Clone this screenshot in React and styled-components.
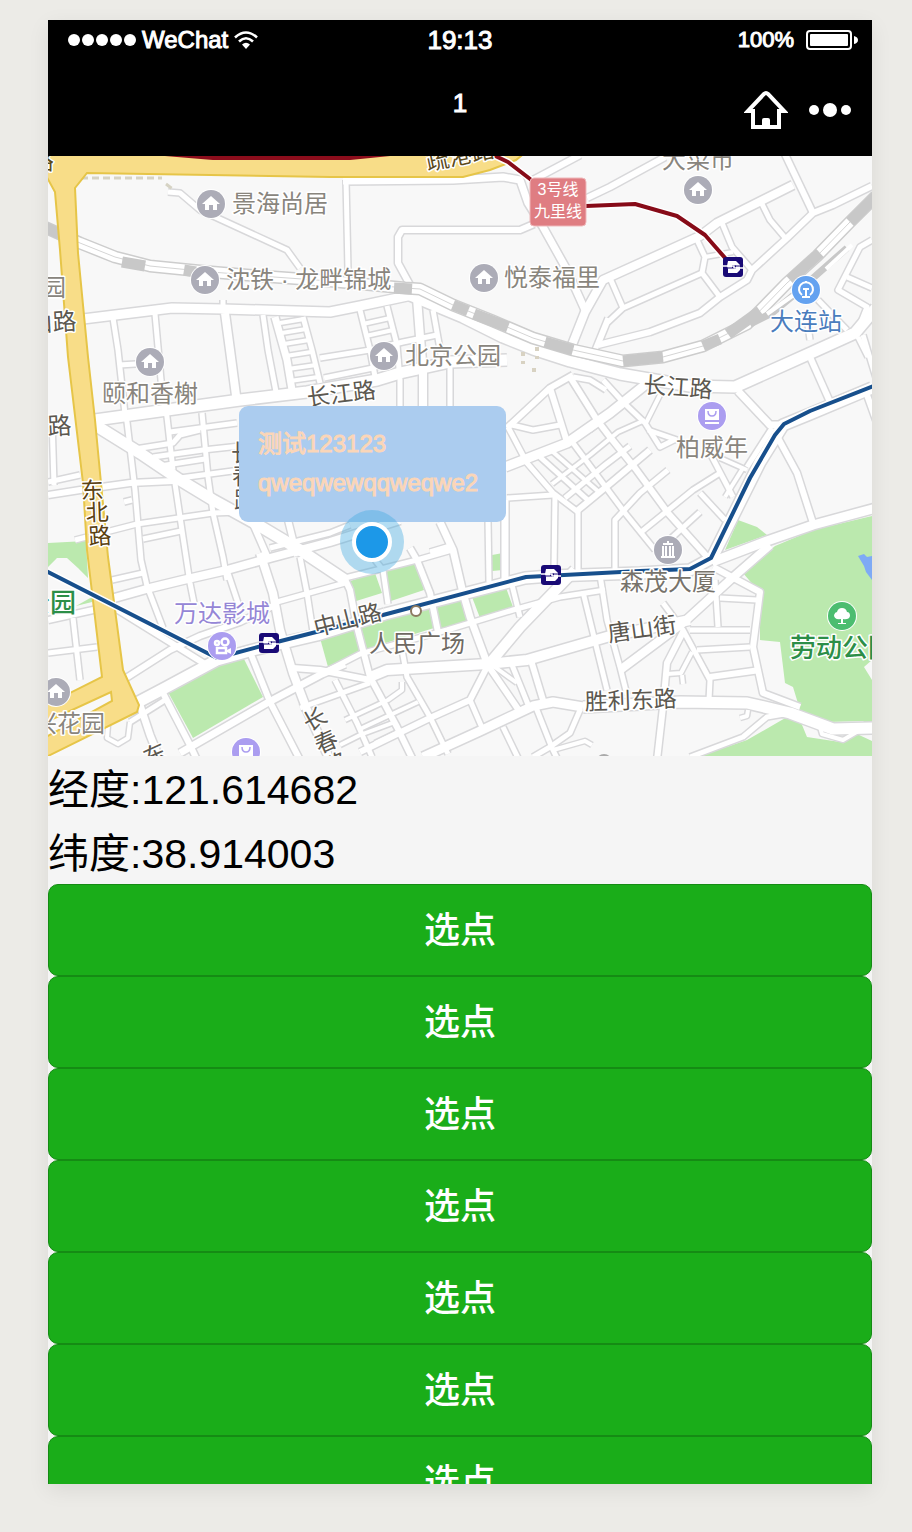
import React from 'react';
import styled, { createGlobalStyle } from 'styled-components';

const sans = '"Liberation Sans", "Noto Sans CJK SC", sans-serif';

const GlobalStyle = createGlobalStyle`
  * {
    box-sizing: border-box;
  }
  body {
    margin: 0;
    background: #ecebe7;
    font-family: ${sans};
  }
`;

const Page = styled.div`
  height: 100vh;
  padding: 20px 40px 48px 48px;
`;

const Phone = styled.main`
  height: 100%;
  overflow: hidden;
  background: #f5f5f5;
  box-shadow: 0 6px 20px rgba(0, 0, 0, 0.08);
`;

const Header = styled.header`
  background: #000;
  color: #fff;
`;

const StatusBar = styled.div`
  display: grid;
  grid-template-columns: 1fr auto 1fr;
  align-items: center;
  height: 40px;
  padding: 0 14px;
`;

const StatusGroup = styled.div`
  display: flex;
  align-items: center;
  justify-content: ${props => (props.$end ? 'flex-end' : 'flex-start')};
  gap: ${props => (props.$end ? 12 : 6)}px;
  padding-left: 6px;
`;

const StatusText = styled.span`
  font-size: ${props => props.$size}px;
  line-height: 40px;
  -webkit-text-stroke: 1px #fff;
`;

const NavBar = styled.div`
  display: grid;
  grid-template-columns: 1fr auto 1fr;
  height: 96px;
  padding: 0 20px;
`;

const Title = styled.h1`
  grid-column: 2;
  margin: 0;
  font-size: 26px;
  font-weight: 400;
  line-height: 86px;
  -webkit-text-stroke: 1px #fff;
`;

const NavActions = styled.div`
  display: flex;
  align-items: center;
  justify-content: flex-end;
  gap: 20px;
  padding-top: 4px;
`;

const IconButton = styled.button`
  display: flex;
  padding: 0;
  border: 0;
  background: none;
  color: #fff;
  cursor: pointer;
`;

const MapView = styled.section`
  position: relative;
  height: 600px;
  overflow: hidden;
  background: #f8f8f8;
`;

const MapCanvas = styled.svg`
  display: block;
  width: 100%;
  height: 100%;
  font-family: ${sans};
`;

const Callout = styled.div`
  position: absolute;
  top: 250px;
  left: 191px;
  min-width: 267px;
  padding: 18px 19px 20px;
  border-radius: 9px;
  background: #abccef;
  color: #fbd6b8;
  font-size: 24px;
  line-height: 39px;
  -webkit-text-stroke: 1px #fbd6b8;
`;

const Marker = styled.div`
  position: absolute;
  top: 354px;
  left: 292px;
  display: flex;
  align-items: center;
  justify-content: center;
  width: 64px;
  height: 64px;
  border-radius: 50%;
  background: rgba(66, 170, 226, 0.4);
  &::after {
    content: '';
    width: 32px;
    height: 32px;
    border: 4px solid #fff;
    border-radius: 50%;
    background: #1c98e8;
  }
`;

const Coordinates = styled.div`
  padding-top: 2px;
  height: 128px;
`;

const Coordinate = styled.p`
  margin: 0;
  color: #000;
  font-size: 41px;
  line-height: 64px;
`;

const PickButton = styled.button`
  display: block;
  width: 100%;
  height: 92px;
  padding: 2px 0 0;
  border: 1px solid #158b14;
  border-radius: 10px;
  background: #1aad19;
  color: #fff;
  font-family: ${sans};
  font-size: 36px;
  font-weight: 500;
  line-height: 88px;
  cursor: pointer;
`;

// [width, points]
const roads = [
  // upper left
  [5, '168,192 180,193 200,210 287,250 300,268'],
  [9, '83,319 172,308 223,309 330,312 360,306 412,295'],
  [5, '113,318 118,350 125,414 127,422 135,490 141,560 147,586 163,628'],
  [5, '119,365 152,363'],
  [5, '155,314 161,380 167,417 173,470 183,537 190,583 194,603'],
  [8, '225,313 230,350 237,403'],
  [5, '263,315 268,350 277,397'],
  [7, '275,317 287,360 292,390'],
  [5, '303,317 312,350 320,383'],
  [5, '223,309 223,300'],
  [4, '280,323 304,319'],
  [4, '282,333 306,329'],
  [4, '284,344 309,340'],
  [4, '286,356 311,352'],
  [4, '288,369 316,365'],
  [4, '290,381 318,377'],
  [5, '346,180 348,270'],
  [6, '410,285 398,263 398,237 402,230 520,230 534,224'],
  [7, '343,181 453,180 503,177 520,180 528,203 543,227 567,270 585,310'],
  [6, '533,180 580,155'],
  [6, '587,198 610,187 665,157'],
  [5, '360,310 370,350 376,382'],
  [5, '387,306 397,345 400,380 400,410'],
  [8, '417,298 420,337 423,373 423,410'],
  [5, '433,310 443,366'],
  [4, '363,324 390,318'],
  [4, '366,336 393,330'],
  [5, '320,358 370,350 403,342 437,335'],
  [5, '450,366 450,410'],
  [5, '324,378 373,368 400,358'],
  // changjiang road west and the diagonal
  [11, '95,420 167,410 240,400 307,392 377,380 400,373 450,362 507,360'],
  [11, '95,425 140,453 180,480 213,500 253,522 300,550 345,580'],
  [5, '170,432 237,423'],
  [5, '135,449 173,443 180,435 200,430'],
  [5, '153,457 203,450 240,446'],
  [5, '160,466 205,459'],
  [5, '180,478 240,470'],
  [5, '202,413 208,477 213,513 223,557 227,580'],
  [6, '48,495 80,490 130,483 173,481'],
  [5, '52,418 54,485'],
  [5, '48,482 80,475'],
  [5, '75,540 137,524 213,513 240,512'],
  [5, '143,539 181,531'],
  [5, '132,500 124,502'],
  [6, '253,524 267,556'],
  [6, '288,520 297,556'],
  [5, '270,548 330,533 350,525'],
  [8, '100,602 150,588 183,580 227,570 270,558 330,542 400,520'],
  [5, '112,580 143,573'],
  [5, '227,570 241,612'],
  [8, '260,553 273,593 280,630 293,673 307,710 330,760'],
  [5, '277,602 345,583'],
  [5, '300,557 307,593 313,632'],
  // lower left
  [6, '48,620 93,610 115,600'],
  [5, '48,653 97,647'],
  [5, '73,618 80,680'],
  [6, '118,610 168,641 205,664'],
  [6, '123,680 170,650 200,636 240,622 277,604'],
  [11, '127,708 165,688 217,660 253,650 317,635 385,614'],
  [5, '130,722 165,700'],
  [6, '163,693 190,745 197,760'],
  [7, '180,753 267,703 322,674 345,664'],
  [6, '250,652 270,702 300,760'],
  [7, '140,705 150,735 160,760'],
  [4, '108,725 107,738 118,744 128,738 130,722'],
  // city core
  [11, '872,388 810,414 783,425 760,462 712,558 690,570 640,573 550,576 525,578 463,594 385,614'],
  [6, '343,575 350,590 357,627 370,677 397,727 413,760'],
  [5, '375,560 383,570 388,604'],
  [5, '345,578 417,560 452,550'],
  [6, '410,548 417,560 430,593 438,632'],
  [7, '440,522 453,550 463,593 470,617 487,663'],
  [5, '488,520 489,582'],
  [7, '505,500 505,582'],
  [5, '450,546 430,552'],
  [5, '325,672 360,654 447,630 513,610 560,597 605,590'],
  [10, '370,677 387,670 487,664 527,660 610,636 690,620'],
  [6, '293,668 320,670 370,680'],
  [10, '490,663 520,627 575,570'],
  [5, '510,577 520,617'],
  [5, '583,592 593,633 607,690'],
  [6, '530,657 543,700'],
  [5, '510,660 529,707'],
  [6, '487,664 507,693 520,712'],
  [4, '492,665 517,683'],
  [9, '423,757 480,731 533,706 553,702 583,707'],
  [6, '487,667 470,700 430,718 360,752'],
  [5, '470,700 483,730'],
  [5, '402,650 407,677 430,717 448,754'],
  [5, '300,708 370,683'],
  [5, '335,680 357,723 372,757'],
  [4, '345,720 388,700 402,690 402,682'],
  [4, '358,730 418,702'],
  [4, '340,745 360,735 395,722'],
  [4, '375,743 402,730'],
  [5, '580,710 570,733 550,747 533,757'],
  [5, '503,727 519,760'],
  [5, '535,705 552,748 558,760'],
  [4, '553,750 585,741 592,745'],
  // grid east of the callout
  [6, '507,428 550,388 573,375'],
  [5, '512,425 533,430 560,425'],
  [6, '550,388 567,442'],
  [5, '508,427 527,463 553,493 578,512'],
  [9, '505,467 567,443 610,413 645,385'],
  [5, '507,498 553,495'],
  [5, '555,495 554,570'],
  [5, '578,508 578,570'],
  [6, '570,377 597,420 610,437 635,468 668,513 710,560'],
  [5, '573,377 590,380 606,390'],
  [5, '540,457 590,502'],
  [4, '553,452 600,493'],
  [5, '573,443 625,513 655,550'],
  [6, '578,510 612,482 650,450'],
  [4, '552,484 590,455 618,432 645,420'],
  [5, '565,498 605,465 630,446'],
  [5, '603,380 623,402 645,423 660,447 676,439'],
  [4, '645,425 660,395'],
  [5, '648,430 677,440'],
  [4, '590,430 620,405'],
  [5, '615,570 615,520 640,493 668,470'],
  [5, '640,533 693,490 720,473'],
  [5, '655,553 700,512'],
  [5, '700,493 725,520'],
  [5, '711,455 733,497'],
  [4, '720,458 747,470'],
  [4, '725,497 743,468'],
  // north east
  [11, '410,295 463,317 503,337 533,349 570,361 620,374 690,386 735,387 813,352 855,333 876,308'],
  [8, '566,360 585,312 603,280 700,236 717,223 793,185'],
  [6, '783,150 813,213'],
  [5, '760,200 770,220 787,240'],
  [5, '722,223 732,247 752,270'],
  [6, '872,186 833,205 813,213 787,238 752,270 747,280 720,297 700,313 650,332 598,345'],
  [5, '697,240 705,257 702,273 720,297'],
  [4, '705,257 733,252'],
  [5, '702,273 623,308 607,323 598,345'],
  [5, '610,278 623,308'],
  [5, '872,240 860,247 838,290 867,307 858,330'],
  [5, '847,277 872,288'],
  [5, '810,340 808,325'],
  [5, '818,300 847,330'],
  [5, '858,337 868,357'],
  [5, '595,350 608,318'],
  [6, '810,357 830,402'],
  [5, '863,335 876,378'],
  [6, '867,395 876,420'],
  [7, '738,391 770,425 783,425'],
  [5, '772,428 747,467'],
  [6, '778,438 797,473 813,523'],
  [9, '876,508 813,525 767,541 712,562'],
  [8, '770,545 730,580 683,623 620,670'],
  // lower right
  [5, '600,575 607,620 620,667 627,695'],
  [6, '713,567 760,592 753,647 763,693 800,707'],
  [5, '715,580 718,627'],
  [5, '720,598 757,600'],
  [5, '690,630 750,630'],
  [5, '663,603 683,630 710,680 709,700'],
  [6, '683,632 667,663 663,707 657,760'],
  [5, '697,650 750,647'],
  [6, '710,677 760,670'],
  [4, '667,674 681,673 692,652'],
  [4, '682,675 683,684'],
  [11, '583,707 680,702 747,703 790,713 833,729 876,728'],
  [5, '690,757 743,737 767,717 790,713'],
  [4, '820,727 822,734 843,740 860,730'],
  [4, '748,710 747,716 740,718']
];

const rail =
  '40,225 80,243 115,257 150,266 200,271 260,276 330,281 405,288 420,289 453,305 493,321 533,338 573,350 623,361 663,357 703,346 747,324 787,283 817,256 850,222 876,196';
const railDark = [
  '40,225 60,234',
  '122,262 145,266',
  '184,270 196,272',
  '394,288 412,289',
  '453,305 468,311',
  '474,314 508,327',
  '545,342 573,350',
  '623,361 663,357',
  '703,346 720,339',
  '728,334 760,311',
  '790,280 820,253',
  '850,222 876,196'
];

const parks = [
  '872,516 813,530 775,546 743,573 760,593 760,640 780,642 785,683 793,687 800,710 827,722 863,721 872,727',
  '700,756 747,740 787,717 800,720 807,737 840,742 857,734 872,741 872,756',
  '738,520 757,527 767,535 725,550',
  '48,543 86,541 88,578 78,568 67,558 57,558 48,567',
  '76,606 92,597 92,602',
  '168,692 217,665 243,657 263,697 193,738',
  '347,582 375,573 382,593 353,602',
  '383,572 415,560 424,590 388,602',
  '320,638 353,628 360,653 328,667',
  '360,624 428,605 434,628 363,650',
  '435,608 463,598 472,620 440,630',
  '472,597 505,585 513,607 480,618',
  '492,555 503,553 503,570 492,571'
];

const labels = [
  { t: '景海尚居', x: 232, y: 212 },
  { t: '沈铁 · 龙畔锦城', x: 226, y: 288 },
  { t: '悦泰福里', x: 504, y: 286 },
  { t: '北京公园', x: 405, y: 364 },
  { t: '颐和香榭', x: 102, y: 402 },
  { t: '大菜市', x: 662, y: 168 },
  { t: '柏威年', x: 676, y: 456 },
  { t: '森茂大厦', x: 620, y: 590, c: '#77736b' },
  { t: '人民广场', x: 369, y: 652, c: '#6f6a63' },
  { t: '兴花园', x: 33, y: 732 },
  { t: '园', x: 42, y: 296 },
  { t: '山路', x: 29, y: 332, r: -3, c: '#5c5850' },
  { t: '路', x: 48, y: 435, r: -3, c: '#5c5850' },
  { t: '路', x: 30, y: 169, c: '#5b4a1a' },
  { t: '大连站', x: 770, y: 330, c: '#4a7dbd' },
  { t: '万达影城', x: 174, y: 622, c: '#9586d6' },
  { t: '劳动公园', x: 790, y: 657, c: '#2c8e48', s: 26, w: 500 },
  { t: '公园', x: 24, y: 612, c: '#2c8e48', s: 26, w: 500 },
  { t: '长江路', x: 308, y: 406, r: -7, c: '#5c5850', s: 23 },
  { t: '长江路', x: 643, y: 393, r: 4, c: '#5c5850', s: 23 },
  { t: '中山路', x: 316, y: 636, r: -14, c: '#5c5850', s: 23 },
  { t: '唐山街', x: 609, y: 642, r: -8, c: '#5c5850', s: 23 },
  { t: '胜利东路', x: 585, y: 710, r: -2, c: '#5c5850', s: 23 },
  { t: '疏港路', x: 428, y: 171, r: -12, c: '#5b4a1a', s: 23 },
  { t: '东', x: 81, y: 499, r: -2, c: '#5b4212', s: 23 },
  { t: '北', x: 86, y: 521, r: -2, c: '#5b4212', s: 23 },
  { t: '路', x: 89, y: 545, r: -4, c: '#5b4212', s: 23 },
  { t: '长', x: 309, y: 732, r: -30, c: '#5c5850', s: 23 },
  { t: '春', x: 319, y: 754, r: -24, c: '#5c5850', s: 23 },
  { t: '路', x: 329, y: 776, r: -24, c: '#5c5850', s: 23 },
  { t: '东', x: 148, y: 767, r: -24, c: '#5c5850', s: 23 },
  { t: '长', x: 231, y: 461, c: '#5c5850', s: 23 },
  { t: '春', x: 232, y: 484, c: '#5c5850', s: 23 },
  { t: '路', x: 234, y: 508, c: '#5c5850', s: 23 }
];

const homes = [[211, 204], [205, 280], [484, 278], [384, 356], [150, 362], [698, 190], [56, 692]];
const stations = [[733, 267], [551, 575], [269, 643]];
const shops = [[712, 416], [246, 752]];

const Poi = ({ x, y, color = '#acacb7', children }) => (
  <g transform={`translate(${x} ${y})`}>
    <circle r="15" fill="#fff" />
    <circle r="14" fill={color} />
    {children}
  </g>
);

const Lines = ({ points, ...rest }) => (
  <polyline points={points} fill="none" strokeLinejoin="round" {...rest} />
);

const CityMap = () => (
  <MapCanvas viewBox="48 156 824 600" preserveAspectRatio="xMidYMid slice" role="img" aria-label="地图">
    <rect x="48" y="156" width="824" height="600" fill="#f8f8f8" />
    {parks.map(p => <polygon key={p} points={p} fill="#bbe9ae" />)}
    <path d="M858 556l6-2 3 3 5-1v24l-6-8-2-6z" fill="#7eaaf5" />
    <path d="M864 667l8 13v-20z" fill="#f8f8f8" />

    {roads.map(([w, p]) => <Lines key={p} points={p} stroke="#d8d8da" strokeWidth={w + 3} />)}
    {roads.map(([w, p]) => <Lines key={p} points={p} stroke="#fff" strokeWidth={w} />)}

    {/* railway */}
    <Lines points={rail} stroke="#cdcdcd" strokeWidth="13" />
    <Lines points={rail} stroke="#fff" strokeWidth="10" />
    <Lines points={rail} stroke="#d5d5d5" strokeWidth="1" />
    {railDark.map(p => <Lines key={p} points={p} stroke="#c8c8c8" strokeWidth="11" />)}
    <Lines points="750,324 772,313 795,294 847,248" stroke="#c8c8c8" strokeWidth="7" />
    <Lines points="767,314 795,294 812,280" stroke="#fff" strokeWidth="4" />
    <Lines points="826,269 852,245" stroke="#fff" strokeWidth="4" />
    <path d="M70 178H162M166 184l8 6" stroke="#d6d3c4" strokeWidth="3" strokeDasharray="7 4" fill="none" />
    <path d="M523 352v12M537 347v12M534 368v8" stroke="#d8d2c2" strokeWidth="4" strokeDasharray="4 5" />

    {/* ring road */}
    <path
      d="M44 152H526L516 160 490 170 463 177 330 177 87 173 75 188 78 253 88 357 95 420 108 557 123 670 139 705 137 712 44 758V706L102 677 87 550 83 483 68 357 60 250 55 192 44 172Z"
      fill="#f8dd88"
      stroke="#e6c548"
      strokeWidth="2"
    />
    <path d="M44 723L111 692 112 701 44 738Z" fill="#f8f8f8" stroke="#e6c548" strokeWidth="2" />

    {/* metro */}
    <Lines points="165,154 213,158 350,158 390,154" stroke="#8c0d1c" strokeWidth="4" />
    <Lines points="487,152 508,162 534,182 560,206 586,206 635,204 677,216 705,235 733,267" stroke="#fff" strokeWidth="7" />
    <Lines points="487,152 508,162 534,182 560,206 586,206 635,204 677,216 705,235 733,267" stroke="#870b18" strokeWidth="4" />
    <Lines points="44,570 217,658 269,644 383,615 526,577 640,571 690,569 711,558 750,478 775,435 784,424 810,411 876,385" stroke="#fff" strokeWidth="7" />
    <Lines points="44,570 217,658 269,644 383,615 526,577 640,571 690,569 711,558 750,478 775,435 784,424 810,411 876,385" stroke="#174f8c" strokeWidth="4" />
    <rect x="530" y="178" width="56" height="48" rx="4" fill="#df7d82" stroke="#efb9bb" />
    <g fill="#fff" fontSize="16" textAnchor="middle">
      <text x="558" y="195">3号线</text>
      <text x="558" y="217">九里线</text>
    </g>
    {stations.map(([x, y]) => (
      <g key={x} transform={`translate(${x} ${y})`}>
        <rect x="-10" y="-10" width="20" height="20" rx="3" fill="#190a76" />
        <path d="M-5-6H3L7-2V3L4 6H-5V2L-6-1Z" fill="#fff" />
        <path d="M-1-2H2L3-1V2H0L-1 1Z" fill="#190a76" />
        <path d="M-10-1H1V1H10" fill="none" stroke="#fff" strokeWidth="1.5" />
        <path d="M-9 1H-1M2-1H9" fill="none" stroke="#190a76" />
      </g>
    ))}

    {/* places */}
    {homes.map(([x, y]) => (
      <Poi key={x} x={x} y={y}>
        <path d="M0-8L9 0H6V6H2V1H-2V6H-6V0H-9Z" fill="#fff" />
      </Poi>
    ))}
    {shops.map(([x, y]) => (
      <Poi key={x} x={x} y={y} color="#ab9df0">
        <path d="M-7-7H7V4H-7ZM-7 6H7V8H-7Z" fill="#fff" />
        <path d="M-4-5Q-4 0 0 0T4-5" fill="none" stroke="#ab9df0" strokeWidth="1.5" />
      </Poi>
    ))}
    <Poi x={806} y={290} color="#64a2f0">
      <path d="M-4 5A7 7 0 1 1 4 5M0-7V-9" fill="none" stroke="#fff" strokeWidth="2" />
      <path d="M-3-2H3V0H1V6H4V8H-4V6H-1V0H-3Z" fill="#fff" />
    </Poi>
    <Poi x={668} y={550}>
      <path d="M-1-9H1V-7H5V-5H-5V-7H-1ZM-6-4H-4V6H-6ZM-3-4H-1V6H-3ZM1-4H3V6H1ZM4-4H6V6H4ZM-7 6H7V8H-7Z" fill="#fff" />
    </Poi>
    <Poi x={222} y={646} color="#ab9df0">
      <g fill="none" stroke="#fff" strokeWidth="2.5">
        <circle cx="-5" cy="-3" r="2" />
        <circle cx="3" cy="-4" r="3.5" />
        <rect x="-5" y="2" width="9" height="5" />
      </g>
      <path d="M5 4L9 2V8L5 6Z" fill="#fff" />
    </Poi>
    <Poi x={842} y={616} color="#4cbd70">
      <path d="M-1 3Q-8 4-8-1Q-7-4-5-4Q-4-8 0-8T5-4Q8-4 8 0Q7 4 1 3V7H4V8H-4V7H-1Z" fill="#fff" />
    </Poi>
    <circle cx="416" cy="611" r="5" fill="#fff" stroke="#8c7a60" strokeWidth="2" />
    <circle cx="604" cy="762" r="8" fill="#aaa" />

    {labels.map(({ t, x, y, r = 0, c = '#89857d', s = 24, w = 400 }) => (
      <text
        key={`${t}${x}`}
        transform={`translate(${x} ${y}) rotate(${r})`}
        fontSize={s}
        fontWeight={w}
        fill={c}
        stroke="#fff"
        strokeWidth="3"
        strokeLinejoin="round"
        paintOrder="stroke"
      >
        {t}
      </text>
    ))}
  </MapCanvas>
);

const SignalIcon = () => (
  <svg width="68" height="12" viewBox="0 0 68 12" fill="#fff">
    {[6, 20, 34, 48, 62].map(x => <circle key={x} cx={x} cy="6" r="6" />)}
  </svg>
);

const WifiIcon = () => (
  <svg width="24" height="18" viewBox="0 0 24 18" fill="none" stroke="#fff" strokeWidth="2.6">
    <path d="M1 6.5Q12-3.500 23 6.500M5 10.500Q12 4 19 10.500" />
    <path d="M8 13.500Q12 10 16 13.500L12 18Z" fill="#fff" stroke="none" />
  </svg>
);

const BatteryIcon = () => (
  <svg width="52" height="20" viewBox="0 0 52 20">
    <rect x="1" y="1" width="44" height="18" rx="3" fill="none" stroke="#fff" strokeWidth="2" />
    <rect x="4" y="4" width="38" height="12" rx="1" fill="#fff" />
    <path d="M48 6Q52 7 52 10T48 14Z" fill="#fff" />
  </svg>
);

const HomeIcon = () => (
  <svg width="44" height="40" viewBox="0 0 44 40">
    <path
      d="M9 21H4L20 4Q22 2 24 4L40 21H35V37H9Z"
      fill="none"
      stroke="#fff"
      strokeWidth="4"
      strokeLinejoin="miter"
    />
    <path d="M18 37V30Q18 28 20 28H24Q26 28 26 30V37Z" fill="#fff" />
  </svg>
);

const MoreIcon = () => (
  <svg width="44" height="16" viewBox="0 0 44 16" fill="#fff">
    <circle cx="6" cy="8" r="5" />
    <circle cx="22" cy="8" r="7" />
    <circle cx="38" cy="8" r="5" />
  </svg>
);

const App = () => (
  <>
    <GlobalStyle />
    <Page>
      <Phone>
        <Header>
          <StatusBar>
            <StatusGroup>
              <SignalIcon />
              <StatusText $size={24}>WeChat</StatusText>
              <WifiIcon />
            </StatusGroup>
            <StatusText $size={26}>19:13</StatusText>
            <StatusGroup $end>
              <StatusText $size={22}>100%</StatusText>
              <BatteryIcon />
            </StatusGroup>
          </StatusBar>
          <NavBar>
            <Title>1</Title>
            <NavActions>
              <IconButton aria-label="首页"><HomeIcon /></IconButton>
              <IconButton aria-label="更多"><MoreIcon /></IconButton>
            </NavActions>
          </NavBar>
        </Header>
        <MapView>
          <CityMap />
          <Callout>
            测试123123
            <br />
            qweqwewqqweqwe2
          </Callout>
          <Marker />
        </MapView>
        <Coordinates>
          <Coordinate>经度:121.614682</Coordinate>
          <Coordinate>纬度:38.914003</Coordinate>
        </Coordinates>
        {[1, 2, 3, 4, 5, 6, 7].map(n => <PickButton key={n}>选点</PickButton>)}
      </Phone>
    </Page>
  </>
);

export default App;
